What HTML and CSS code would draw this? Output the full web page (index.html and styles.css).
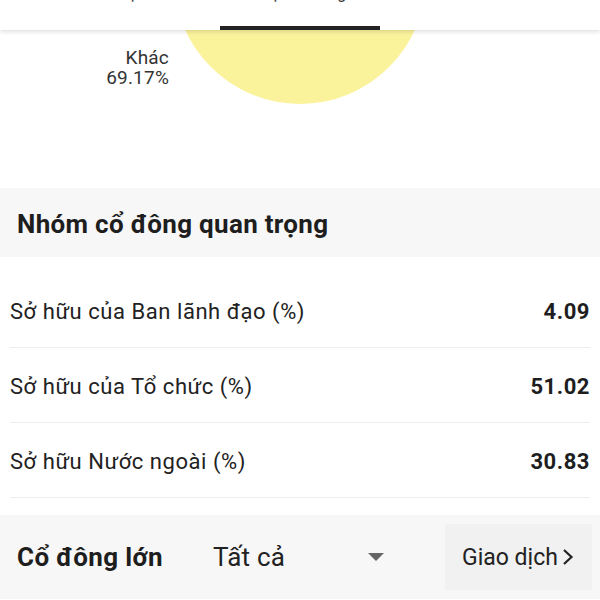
FILE: index.html
```html
<!DOCTYPE html>
<html lang="vi">
<head>
<meta charset="utf-8">
<link rel="stylesheet" href="styles.css">
</head>
<body>
<div class="tabs">
  <div class="tab"><span class="tab-label">Ban lãnh đạo</span></div>
  <div class="tab active"><span class="tab-label">Loại cổ đông</span><span class="indicator"></span></div>
  <div class="tab"><span class="tab-label">Tổ chức</span></div>
</div>
<div class="chart">
  <div class="pie"></div>
  <div class="legend"><div>Khác</div><div>69.17%</div></div>
</div>
<div class="section-head">Nhóm cổ đông quan trọng</div>
<div class="list">
  <div class="row"><span class="label">Sở hữu của Ban lãnh đạo (%)</span><span class="value">4.09</span></div>
  <div class="row"><span class="label">Sở hữu của Tổ chức (%)</span><span class="value">51.02</span></div>
  <div class="row"><span class="label">Sở hữu Nước ngoài (%)</span><span class="value">30.83</span></div>
</div>
<div class="bottom">
  <span class="b-title">Cổ đông lớn</span>
  <div class="select"><span>Tất cả</span><span class="caret"></span></div>
  <div class="btn"><span>Giao dịch</span><svg class="chev" width="12" height="18" viewBox="0 0 12 18"><path d="M2 2 L9.5 9 L2 16" fill="none" stroke="#222" stroke-width="2.2"/></svg></div>
</div>
</body>
</html>
```
FILE: styles.css
```css
* { box-sizing: border-box; }
html, body { margin: 0; padding: 0; background: #fff; }
body {
  width: 600px;
  height: 600px;
  overflow: hidden;
  font-family: Roboto, "Noto Sans", sans-serif;
  color: #222;
}
.tabs {
  position: relative;
  z-index: 2;
  height: 30px;
  background: #fff;
  display: grid;
  grid-template-columns: 200px 200px 200px;
  box-shadow: 0 2px 4px rgba(0,0,0,0.12);
}
.tab {
  position: relative;
  overflow: hidden;
  text-align: center;
  font-size: 16px;
  line-height: 20px;
  color: #333;
}
.tab-label { display: block; margin-top: -16px; }
.indicator {
  position: absolute;
  left: 20px;
  right: 20px;
  bottom: 0;
  height: 4px;
  background: #222;
}
.chart {
  position: relative;
  height: 158px;
  overflow: hidden;
}
.pie {
  width: 252px;
  height: 252px;
  border-radius: 50%;
  background: #fbf39c;
  margin: -178px auto 0;
}
.legend {
  position: absolute;
  right: 431px;
  top: 18px;
  text-align: right;
  font-size: 19px;
  line-height: 20px;
  letter-spacing: 0.2px;
  color: #333;
}
.section-head {
  height: 69px;
  background: #f7f7f7;
  padding-left: 17px;
  padding-top: 3px;
  display: flex;
  align-items: center;
  font-size: 26px;
  letter-spacing: 0.3px;
  font-weight: 700;
  color: #1e1e1e;
}
.list { padding: 16px 10px 0; }
.row {
  height: 75px;
  border-bottom: 1px solid #eeeeee;
  display: flex;
  justify-content: space-between;
  align-items: center;
  padding-top: 3px;
  font-size: 22px;
  letter-spacing: 0.55px;
}
.label { color: #222; }
.value { font-weight: 700; color: #1e1e1e; }
.bottom {
  margin-top: 17px;
  height: 84px;
  background: #f7f7f7;
  display: flex;
  align-items: center;
  padding-left: 17px;
}
.b-title {
  font-size: 26px;
  letter-spacing: 0.4px;
  font-weight: 700;
  color: #1e1e1e;
  width: 196px;
}
.select {
  width: 232px;
  display: flex;
  align-items: center;
  font-size: 26px;
  letter-spacing: 0.2px;
  color: #222;
}
.caret {
  margin-left: 83px;
  width: 0;
  height: 0;
  border-left: 8px solid transparent;
  border-right: 8px solid transparent;
  border-top: 8px solid #666;
}
.btn {
  width: 147px;
  height: 66px;
  background: #f1f1f1;
  display: flex;
  align-items: center;
  padding-left: 17px;
  font-size: 23px;
  color: #222;
  gap: 4px;
}
.chev { display: block; }
```
